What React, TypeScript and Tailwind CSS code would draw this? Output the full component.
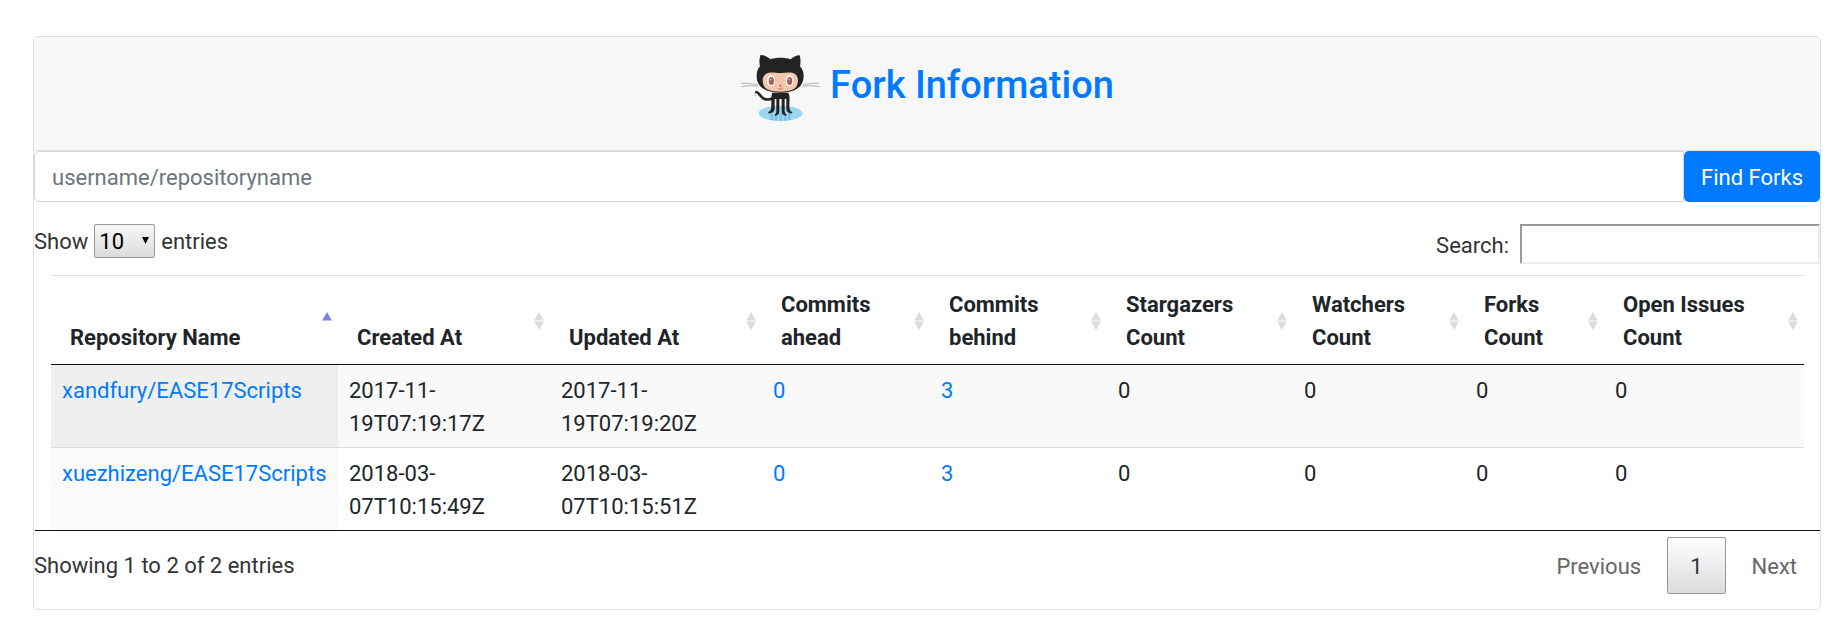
import { useState } from 'react';

type Fork = {
  name: string;
  created: string;
  updated: string;
  ahead: number;
  behind: number;
  stars: number;
  watchers: number;
  forks: number;
  issues: number;
};

const forks: Fork[] = [
  {
    name: 'xandfury/EASE17Scripts',
    created: '2017-11-19T07:19:17Z',
    updated: '2017-11-19T07:19:20Z',
    ahead: 0,
    behind: 3,
    stars: 0,
    watchers: 0,
    forks: 0,
    issues: 0,
  },
  {
    name: 'xuezhizeng/EASE17Scripts',
    created: '2018-03-07T10:15:49Z',
    updated: '2018-03-07T10:15:51Z',
    ahead: 0,
    behind: 3,
    stars: 0,
    watchers: 0,
    forks: 0,
    issues: 0,
  },
];

const columns = [
  { label: 'Repository Name', width: 'w-[287px]' },
  { label: 'Created At', width: 'w-[212px]' },
  { label: 'Updated At', width: 'w-[212px]' },
  { label: 'Commits ahead', width: 'w-[168px]' },
  { label: 'Commits behind', width: 'w-[177px]' },
  { label: 'Stargazers Count', width: 'w-[186px]' },
  { label: 'Watchers Count', width: 'w-[172px]' },
  { label: 'Forks Count', width: 'w-[139px]' },
  { label: 'Open Issues Count', width: 'w-[200px]' },
];

function Octocat() {
  return (
    <svg viewBox="24 27 240 204" className="h-[68px] w-20 shrink-0" aria-hidden="true">
      <ellipse cx="146" cy="205" rx="66" ry="23" fill="#9ad8f2" />
      <path d="M119 206v19M132 203v24M146 206v22M160 206v22M172 203v22" stroke="#7fbbe6" strokeWidth="7" />
      <path
        d="M73 141c11 2 13 20 28 22 8 1 16 0 23-3"
        fill="none"
        stroke="#232323"
        strokeWidth="8"
        strokeLinecap="round"
      />
      <path d="M80 151c7 11 14 16 31 16" fill="none" stroke="#4f7580" strokeWidth="2" strokeDasharray="3 4" />
      <path d="M70 146l-1 5" stroke="#9ad8f2" strokeWidth="4" strokeLinecap="round" />
      <path
        d="M121 143c-5 12-2 24-3 38 0 11-1 17-9 20-2 3 1 5 5 4 9-1 14-6 14-16v-27h5v35c0 6-1 9-5 12-1 4 4 4 8 1 5-3 6-7 6-13v-35h7v35c0 6 1 11 7 14 5 2 9 1 7-3-4-3-5-6-5-12v-34h5v27c0 10 4 15 13 16 5 1 6-2 4-4-7-3-8-9-8-20 0-14 3-27-3-38z"
        fill="#232323"
      />
      <path
        d="M86 30c-4 8-5 23-2 34-7 8-10 17-10 29 0 32 24 50 71 50 46 0 70-18 70-50 0-12-4-22-11-29 3-11 1-27-1-33-8-1-20 6-27 12-18-6-45-6-61 0-8-7-20-14-29-13z"
        fill="#232323"
      />
      <path
        d="M108 84c12-3 23 0 37 0s26-3 38 0c10 3 15 11 15 22 0 26-18 34-53 34s-53-8-53-34c0-11 6-19 16-22z"
        fill="#f3c6ad"
      />
      <ellipse cx="117" cy="107" rx="12" ry="17" fill="#fff" />
      <ellipse cx="173" cy="107" rx="12" ry="17" fill="#fff" />
      <ellipse cx="118" cy="108" rx="8" ry="12" fill="#ad5c51" />
      <ellipse cx="173" cy="108" rx="8" ry="12" fill="#ad5c51" />
      <circle cx="116" cy="104" r="2" fill="#fff" />
      <circle cx="171" cy="104" r="2" fill="#fff" />
      <circle cx="145" cy="122" r="3" fill="#ad5c51" />
      <path d="M139 130c3 4 9 4 12 0" fill="none" stroke="#ad5c51" strokeWidth="2.5" strokeLinecap="round" />
      <path
        d="M28 115c16-1 31 1 49 4M28 125c17-3 32-4 50-1M262 115c-16-1-31 1-49 4M262 125c-17-3-32-4-50-1"
        fill="none"
        stroke="#8d8d8d"
        strokeWidth="2"
      />
    </svg>
  );
}

function SortIcon({ active }: { active: boolean }) {
  return (
    <svg viewBox="0 0 10 18" className="h-[18px] w-[10px] shrink-0 self-center" aria-hidden="true">
      <path d="M5 0l5 8.5H0z" fill={active ? '#7f84e0' : '#dcdcdc'} />
      {!active && <path d="M0 9.5h10L5 18z" fill="#dcdcdc" />}
    </svg>
  );
}

export default function App() {
  const [repo, setRepo] = useState('');
  const [query, setQuery] = useState('');
  const rows = forks.filter((f) => f.name.toLowerCase().includes(query.toLowerCase()));

  return (
    <main className="bg-white pt-9 pr-[23px] pb-[22px] pl-[33px] font-[Roboto,sans-serif] text-[22px] leading-[33px] text-[#212529]">
      <section className="rounded-[5px] border border-[#dfdfdf]">
        <header className="flex justify-center gap-[10px] rounded-t-[4px] border-b border-[#dfdfdf] bg-[#f7f7f7] pt-[17px] pb-7">
          <Octocat />
          <h1 className="pt-2 text-[38px] leading-[46px] font-medium">
            <a href="#" className="text-[#007bff]">
              Fork Information
            </a>
          </h1>
        </header>

        <form className="flex" onSubmit={(e) => e.preventDefault()}>
          <input
            type="text"
            aria-label="Repository"
            placeholder="username/repositoryname"
            value={repo}
            onChange={(e) => setRepo(e.target.value)}
            className="h-[51px] min-w-0 flex-1 rounded-l-[5px] border border-[#ced4da] px-[17px] pt-0.5 placeholder:text-[#6c757d]"
          />
          <button type="submit" className="h-[51px] rounded-[5px] bg-[#007bff] px-[17px] pt-0.5 text-white">
            Find Forks
          </button>
        </form>

        <div className="flex items-start justify-between pt-[22px] pb-[11px] text-[#333]">
          <div className="flex items-center gap-[6px] leading-8">
            <label htmlFor="page-size" className="pt-0.5">
              Show
            </label>
            <span className="relative flex">
              <select
                id="page-size"
                className="h-[34px] w-[61px] appearance-none rounded-[2px] border border-[#999] bg-linear-to-b from-[#f6f6f6] to-[#dcdcdc] pt-0.5 pl-1 leading-[30px] text-black"
              >
                <option>10</option>
                <option>25</option>
                <option>50</option>
                <option>100</option>
              </select>
              <svg viewBox="0 0 6 6" className="pointer-events-none absolute top-[13px] right-[6px] size-[7px]" aria-hidden="true">
                <path d="M0 0h6L3 6z" fill="#000" />
              </svg>
            </span>
            <span className="pt-0.5">entries</span>
          </div>
          <div className="flex items-center gap-[11px]">
            <label htmlFor="search" className="pt-0.5">
              Search:
            </label>
            <input
              id="search"
              type="search"
              value={query}
              onChange={(e) => setQuery(e.target.value)}
              className="h-10 w-[300px] border-2 border-t-[#999] border-r-[#eee] border-b-[#eee] border-l-[#999] bg-white px-1"
            />
          </div>
        </div>

        <div className="ml-px border-b border-[#111] pr-4 pl-4">
          <table className="w-full table-fixed border-separate border-spacing-0">
            <colgroup>
              {columns.map((c) => (
                <col key={c.label} className={c.width} />
              ))}
            </colgroup>
            <thead>
              <tr>
                {columns.map((c, i) => (
                  <th
                    key={c.label}
                    scope="col"
                    className="border-t border-b border-t-[#dee2e6] border-b-[#111] pt-3 pr-[6px] pb-[10px] pl-[19px] text-left align-bottom font-bold"
                  >
                    <button type="button" className="flex min-h-[66px] w-full items-end justify-between gap-2 text-left">
                      <span>{c.label}</span>
                      <SortIcon active={i === 0} />
                    </button>
                  </th>
                ))}
              </tr>
            </thead>
            <tbody className="[&_td]:px-[11px] [&_td]:pt-[9px] [&_td]:pb-[7px] [&_td]:align-top [&_tr+tr>td]:border-t [&_tr+tr>td]:border-[#ddd]">
              {rows.map((f) => (
                <tr key={f.name} className="group odd:bg-[#f9f9f9]">
                  <td className="bg-[#fafafa] whitespace-nowrap group-odd:bg-[#efefef]">
                    <a href="#" className="text-[#007bff]">
                      {f.name}
                    </a>
                  </td>
                  <td>{f.created}</td>
                  <td>{f.updated}</td>
                  <td>
                    <a href="#" className="text-[#007bff]">
                      {f.ahead}
                    </a>
                  </td>
                  <td>
                    <a href="#" className="text-[#007bff]">
                      {f.behind}
                    </a>
                  </td>
                  <td>{f.stars}</td>
                  <td>{f.watchers}</td>
                  <td>{f.forks}</td>
                  <td>{f.issues}</td>
                </tr>
              ))}
            </tbody>
          </table>
        </div>

        <footer className="flex items-center justify-between pt-[6px] pb-[15px] text-[#333]">
          <p>Showing 1 to 2 of 2 entries</p>
          <nav aria-label="Pagination" className="flex gap-[3px]">
            <button type="button" className="rounded-[2px] border border-transparent px-[22px] pt-3 pb-[10px] text-[#666]">
              Previous
            </button>
            <button
              type="button"
              aria-current="page"
              className="rounded-[2px] border border-[#979797] bg-linear-to-b from-white to-[#dcdcdc] px-[22px] pt-3 pb-[10px]"
            >
              1
            </button>
            <button type="button" className="rounded-[2px] border border-transparent px-[22px] pt-3 pb-[10px] text-[#666]">
              Next
            </button>
          </nav>
        </footer>
      </section>
    </main>
  );
}
